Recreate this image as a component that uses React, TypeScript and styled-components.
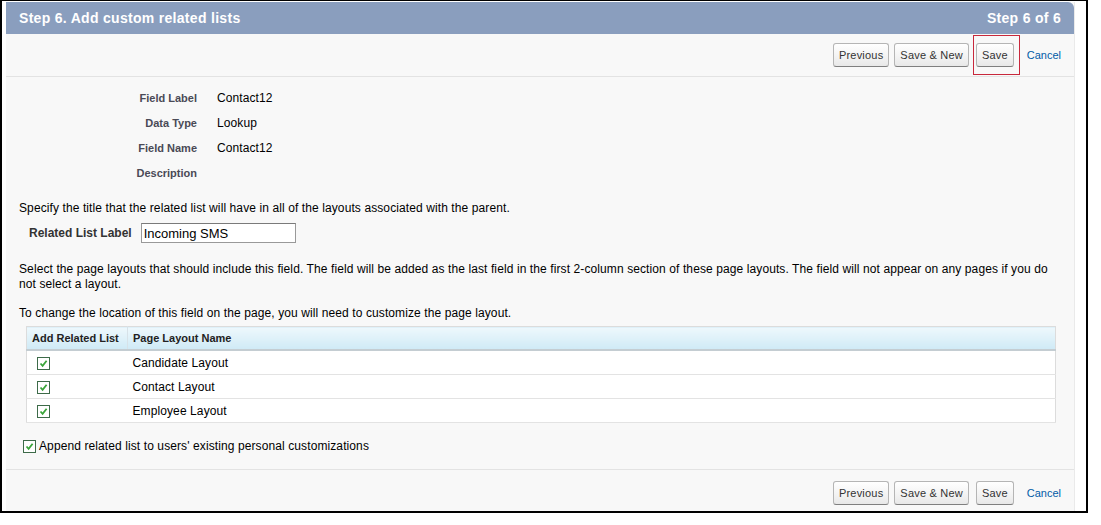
import styled, { createGlobalStyle } from "styled-components";

const GlobalStyle = createGlobalStyle`
  html, body {
    margin: 0;
    padding: 0;
    background: #ffffff;
  }
  body {
    font-family: "Liberation Sans", Arial, sans-serif;
    font-size: 12px;
    color: #000;
  }
`;

const Frame = styled.div`
  width: 1069px;
  height: 509px;
  border: 2px solid #000;
  border-top-width: 1px;
  background: #fff;
  padding: 1px 11px 0 4px;
  box-sizing: content-box;
  display: flex;
`;

const Panel = styled.div`
  flex: 1;
  display: flex;
  flex-direction: column;
  background: #f8f8f8;
  border-right: 1px solid #eaeaea;
`;

const Header = styled.div`
  height: 32px;
  flex-shrink: 0;
  background: #8a9ebe;
  border-top-right-radius: 6px;
  display: flex;
  align-items: center;
  justify-content: space-between;
  padding: 0 13px;
  color: #fff;
  font-weight: bold;
  font-size: 14px;
  letter-spacing: 0.3px;
`;

const ButtonBar = styled.div<{ $top?: boolean }>`
  height: 42px;
  flex-shrink: 0;
  box-sizing: border-box;
  display: flex;
  align-items: center;
  justify-content: flex-end;
  gap: 5px;
  padding-right: 13px;
  border-${(p) => (p.$top ? "bottom" : "top")}: 1px solid #e3e3e3;
  ${(p) => (p.$top ? "height: 43px;" : "margin-top: auto; padding-top: 5px;")}
`;

const SaveWrap = styled.div<{ $highlight?: boolean }>`
  display: flex;
  align-items: center;
  padding: 0 5px 0 2px;
  height: 38px;
  border: 1px solid ${(p) => (p.$highlight ? "#c8283c" : "transparent")};
  margin-left: -1px;
`;

const Button = styled.button`
  font-family: "Liberation Sans", Arial, sans-serif;
  font-size: 11px;
  letter-spacing: 0.2px;
  color: #333;
  height: 24px;
  padding: 0 5px;
  border: 1px solid #b5b5b5;
  border-bottom-color: #7f7f7f;
  border-radius: 3px;
  background: linear-gradient(#ffffff, #f2f2f2 60%, #e8e8e8);
  cursor: pointer;
`;

const CancelLink = styled.a`
  color: #015ba7;
  font-size: 11px;
  margin-left: 2px;
  text-decoration: none;
`;

const Body = styled.div`
  padding: 8px 13px 0 13px;
  display: flex;
  flex-direction: column;
  letter-spacing: 0.1px;
`;

const Details = styled.div`
  display: grid;
  grid-template-columns: 178px auto;
  column-gap: 20px;
  grid-auto-rows: 25px;
  align-items: center;
  margin-bottom: 16px;
`;

const DetailLabel = styled.div`
  text-align: right;
  font-weight: bold;
  font-size: 11px;
  color: #4a4a56;
  letter-spacing: 0;
`;

const DetailValue = styled.div`
  font-size: 12px;
`;

const Text = styled.p<{ $mb?: number }>`
  margin: 0 0 ${(p) => p.$mb ?? 0}px 0;
  font-size: 12px;
  line-height: 15px;
`;

const LabelRow = styled.div`
  display: flex;
  align-items: center;
  gap: 9px;
  padding-left: 10px;
  margin: 7px 0 19px;
`;

const FieldLabel = styled.label`
  font-weight: bold;
  font-size: 12px;
  color: #333;
  letter-spacing: 0;
`;

const TextInput = styled.input`
  width: 149px;
  height: 16px;
  padding: 1px 2px;
  border: 1px solid #999;
  border-top-color: #7a7a7a;
  font-family: "Liberation Sans", Arial, sans-serif;
  font-size: 13px;
`;

const Table = styled.table`
  margin: 5px 0 0 7px;
  width: 1030px;
  border-collapse: collapse;
  background: #fff;
  border: 1px solid #dcdcdc;
`;

const Th = styled.th<{ $w?: number }>`
  text-align: left;
  font-size: 11px;
  font-weight: bold;
  color: #222;
  height: 22px;
  padding: 0 5px;
  width: ${(p) => (p.$w ? `${p.$w}px` : "auto")};
  background: linear-gradient(#eef8fc, #cfeaf6);
  border-bottom: 2px solid #c4cdd2;
  letter-spacing: 0;
  & + & {
    border-left: 1px solid #d7e2e8;
  }
`;

const Td = styled.td<{ $center?: boolean }>`
  height: 23px;
  padding: 0 5px 0 ${(p) => (p.$center ? "10px" : "5px")};
  border-bottom: 1px solid #e3e3e3;
  font-size: 12px;
`;

const Box = styled.span`
  display: inline-flex;
  width: 11px;
  height: 11px;
  border: 1px solid #3d6b49;
  background: #fff;
  align-items: center;
  justify-content: center;
  vertical-align: middle;
`;

const AppendRow = styled.div`
  display: flex;
  align-items: center;
  gap: 3px;
  margin: 16px 0 14px 4px;
  font-size: 12px;
`;

function Check() {
  return (
    <Box>
      <svg width="9" height="9" viewBox="0 0 9 9">
        <path d="M1.5 4.5 L3.6 6.8 L7.6 1.8" fill="none" stroke="#3aa53a" strokeWidth="1.8" />
      </svg>
    </Box>
  );
}

function Buttons({ top }: { top?: boolean }) {
  return (
    <ButtonBar $top={top}>
      <Button>Previous</Button>
      <Button>Save &amp; New</Button>
      <SaveWrap $highlight={top}>
        <Button>Save</Button>
      </SaveWrap>
      <CancelLink href="#">Cancel</CancelLink>
    </ButtonBar>
  );
}

const details = [
  ["Field Label", "Contact12"],
  ["Data Type", "Lookup"],
  ["Field Name", "Contact12"],
  ["Description", ""],
];

const layouts = ["Candidate Layout", "Contact Layout", "Employee Layout"];

export default function App() {
  return (
    <>
      <GlobalStyle />
      <Frame>
        <Panel>
          <Header>
            <span>Step 6. Add custom related lists</span>
            <span>Step 6 of 6</span>
          </Header>
          <Buttons top />
          <Body>
            <Details>
              {details.flatMap(([label, value]) => [
                <DetailLabel key={label}>{label}</DetailLabel>,
                <DetailValue key={label + "-v"}>{value}</DetailValue>,
              ])}
            </Details>
            <Text>Specify the title that the related list will have in all of the layouts associated with the parent.</Text>
            <LabelRow>
              <FieldLabel>Related List Label</FieldLabel>
              <TextInput defaultValue="Incoming SMS" />
            </LabelRow>
            <Text $mb={14}>
              Select the page layouts that should include this field. The field will be added as the last field in the first 2-column section of these page layouts. The field will not appear on any pages if you do not select a layout.
            </Text>
            <Text>To change the location of this field on the page, you will need to customize the page layout.</Text>
            <Table>
              <thead>
                <tr>
                  <Th $w={90}>Add Related List</Th>
                  <Th>Page Layout Name</Th>
                </tr>
              </thead>
              <tbody>
                {layouts.map((name) => (
                  <tr key={name}>
                    <Td $center>
                      <Check />
                    </Td>
                    <Td>{name}</Td>
                  </tr>
                ))}
              </tbody>
            </Table>
            <AppendRow>
              <Check />
              <span>Append related list to users' existing personal customizations</span>
            </AppendRow>
          </Body>
          <Buttons />
        </Panel>
      </Frame>
    </>
  );
}
